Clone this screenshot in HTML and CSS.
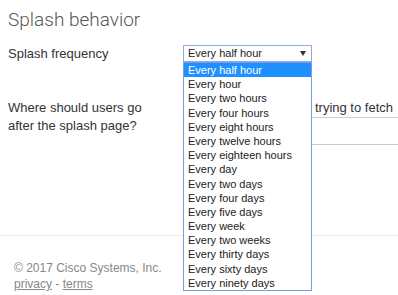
FILE: index.html
```html
<!DOCTYPE html>
<html>
<head>
  <meta charset="utf-8">
  <title>Splash behavior</title>
  <link rel="stylesheet" href="styles.css">
</head>
<body>
  <div class="page">
    <h1 class="section-title">Splash behavior</h1>
    <div class="form-row first-row">
      <div class="form-label">Splash frequency</div>
      <div class="form-control">
        <div class="select-box">
          <span class="select-value">Every half hour</span>
          <span class="select-arrow"></span>
        </div>
        <!-- open dropdown list -->
        <ul class="select-list">
          <li class="selected">Every half hour</li>
          <li>Every hour</li>
          <li>Every two hours</li>
          <li>Every four hours</li>
          <li>Every eight hours</li>
          <li>Every twelve hours</li>
          <li>Every eighteen hours</li>
          <li>Every day</li>
          <li>Every two days</li>
          <li>Every four days</li>
          <li>Every five days</li>
          <li>Every week</li>
          <li>Every two weeks</li>
          <li>Every thirty days</li>
          <li>Every sixty days</li>
          <li>Every ninety days</li>
        </ul>
      </div>
    </div>
    <div class="form-row second-row">
      <div class="form-label">Where should users go<br>after the splash page?</div>
      <div class="form-control">
        <div class="option-row">The URL they were trying to fetch</div>
        <div class="option-row tall"></div>
      </div>
    </div>
  </div>
  <div class="footer">
    <div>&copy; 2017 Cisco Systems, Inc.</div>
    <div><a href="#">privacy</a> - <a href="#">terms</a></div>
  </div>
</body>
</html>
```

FILE: styles.css
```css
body {
  margin: 0;
  font-family: "Liberation Sans", Arial, sans-serif;
  font-size: 12px;
  color: #333;
  background: #fff;
}
.page {
  padding: 8px 0 0 8px;
}
.section-title {
  margin: 0;
  font-family: Roboto, "Liberation Sans", sans-serif;
  font-weight: 300;
  font-size: 19px;
  line-height: 24px;
  color: #555;
}
.form-row {
  display: grid;
  grid-template-columns: 175px 1fr;
}
.first-row {
  margin-top: 13px;
}
.second-row {
  margin-top: 37px;
}
.form-label {
  font-size: 13px;
  line-height: 17px;
}
.second-row .form-label {
  line-height: 18px;
}
.form-control {
  position: relative;
}
.select-box {
  width: 118px;
  height: 15px;
  border: 1px solid #8eabe6;
  display: flex;
  align-items: center;
  justify-content: space-between;
  padding: 0 5px 0 4px;
  font-size: 11px;
  line-height: 15px;
  color: #222;
}
.select-arrow {
  width: 0;
  height: 0;
  border-left: 3.5px solid transparent;
  border-right: 3.5px solid transparent;
  border-top: 5px solid #333;
}
.select-list {
  position: absolute;
  top: 17px;
  left: 0;
  z-index: 2;
  width: 127px;
  margin: 0;
  padding: 0;
  list-style: none;
  background: #fff;
  border: 1px solid #7a9de0;
  font-size: 11px;
  color: #222;
}
.select-list li {
  height: 14.2px;
  line-height: 14px;
  padding-left: 4px;
  white-space: nowrap;
}
.select-list li.selected {
  background: #1e90ff;
  color: #fff;
}
.option-row {
  height: 18px;
  line-height: 18px;
  border-bottom: 1px solid #ccc;
  white-space: nowrap;
  text-align: right;
  padding-right: 5px;
  font-size: 13px;
}
.option-row.tall {
  height: 26px;
}
.footer {
  margin-top: 90px;
  border-top: 1px solid #eaeaea;
  padding: 24px 14px 0;
  color: #888;
  line-height: 16px;
}
.footer a {
  color: #888;
}
```
